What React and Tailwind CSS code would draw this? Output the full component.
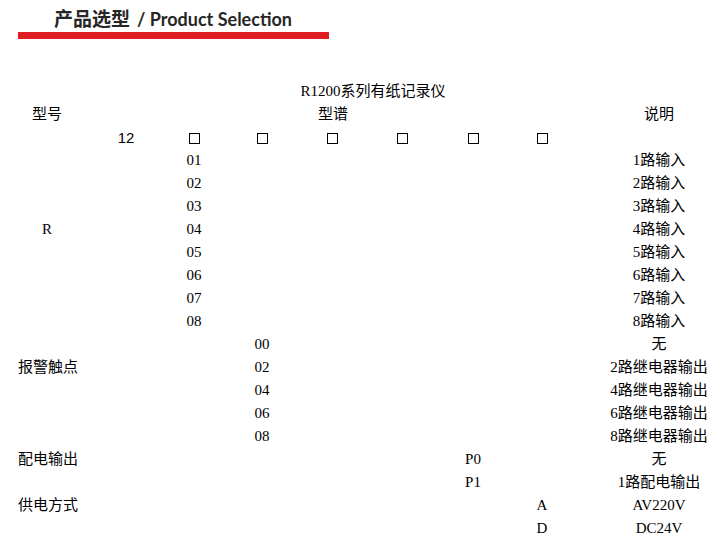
const cols = 'grid grid-cols-[58px_100px_36px_100px_40px_100px_42px_96px_138px] pl-[18px]'

function Box() {
  return <span className="inline-block w-[11px] h-[11px] border border-black align-middle" />
}

const rows = [
  ['', <span className="font-['Liberation_Sans',sans-serif]">12</span>, <Box />, <Box />, <Box />, <Box />, <Box />, <Box />, ''],
  ['', '', '01', '', '', '', '', '', '1路输入'],
  ['', '', '02', '', '', '', '', '', '2路输入'],
  ['', '', '03', '', '', '', '', '', '3路输入'],
  ['R', '', '04', '', '', '', '', '', '4路输入'],
  ['', '', '05', '', '', '', '', '', '5路输入'],
  ['', '', '06', '', '', '', '', '', '6路输入'],
  ['', '', '07', '', '', '', '', '', '7路输入'],
  ['', '', '08', '', '', '', '', '', '8路输入'],
  ['', '', '', '00', '', '', '', '', '无'],
  ['报警触点', '', '', '02', '', '', '', '', '2路继电器输出'],
  ['', '', '', '04', '', '', '', '', '4路继电器输出'],
  ['', '', '', '06', '', '', '', '', '6路继电器输出'],
  ['', '', '', '08', '', '', '', '', '8路继电器输出'],
  ['配电输出', '', '', '', '', '', 'P0', '', '无'],
  ['', '', '', '', '', '', 'P1', '', '1路配电输出'],
  ['供电方式', '', '', '', '', '', '', 'A', 'AV220V'],
  ['', '', '', '', '', '', '', 'D', 'DC24V'],
]

export default function App() {
  return (
    <div className="w-[728px] h-[547px] bg-white overflow-hidden">
      <div className="pt-[7px] pl-[54px] flex items-baseline text-[#262626] whitespace-nowrap">
        <span className="font-['Noto_Sans_CJK_SC',sans-serif] font-bold text-[19px] leading-[22px]">产品选型</span>
        <span className="font-['Lato',sans-serif] font-bold text-[18px] leading-[22px] ml-[7px]">/ Product Selection</span>
      </div>
      <div className="ml-[18px] mt-[2px] w-[311px] h-[7px] bg-[#e01c24]" />

      <div className="mt-[41px] text-black text-[15px] leading-[23px] font-['Liberation_Serif','Noto_Sans_CJK_SC',serif]">
        <div className="pl-[18px] h-[23px] text-center whitespace-nowrap">R1200系列有纸记录仪</div>
        <div className={cols + ' h-[23px] text-center whitespace-nowrap'}>
          <div>型号</div>
          <div className="col-span-7">型谱</div>
          <div>说明</div>
        </div>
        {rows.map((r, i) => (
          <div key={i} className={cols + ' h-[23px] text-center whitespace-nowrap'}>
            {r.map((c, j) => (
              <div key={j}>{c}</div>
            ))}
          </div>
        ))}
      </div>
    </div>
  )
}
